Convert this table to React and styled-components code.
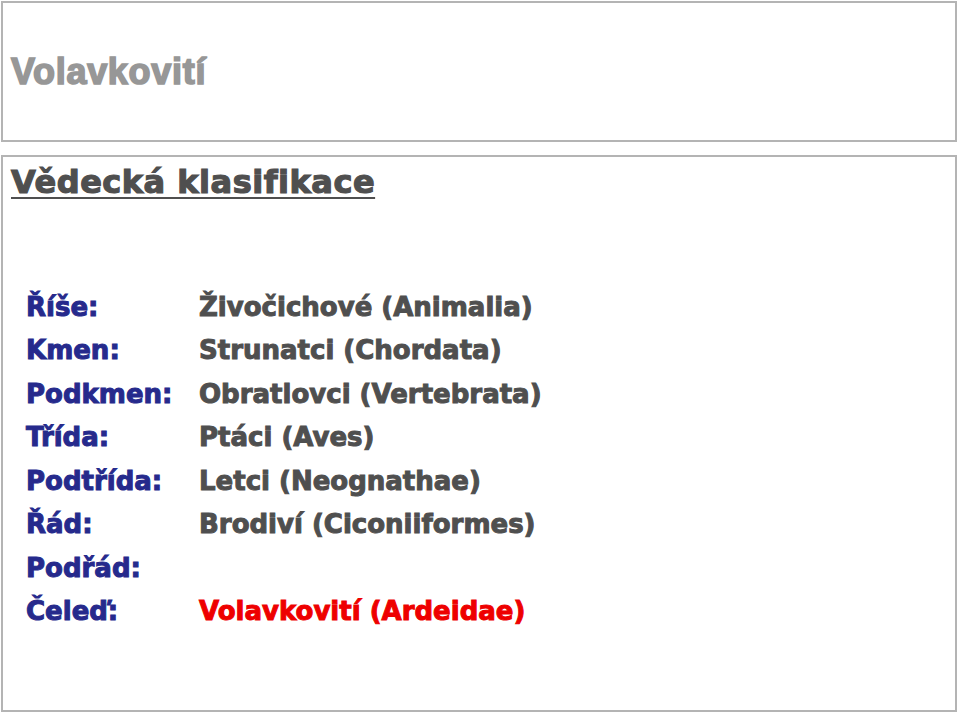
import styled, { createGlobalStyle } from 'styled-components'

const GlobalStyle = createGlobalStyle`
    html, body {
        margin: 0;
        padding: 0;
        background: #fff;
    }
    body {
        font-family: "DejaVu Sans", "Liberation Sans", Arial, sans-serif;
    }
`

const rows = [
    { rank: 'Říše:', name: 'Živočichové (Animalia)' },
    { rank: 'Kmen:', name: 'Strunatci (Chordata)' },
    { rank: 'Podkmen:', name: 'Obratlovci (Vertebrata)' },
    { rank: 'Třída:', name: 'Ptáci (Aves)' },
    { rank: 'Podtřída:', name: 'Letci (Neognathae)' },
    { rank: 'Řád:', name: 'Brodiví (Ciconiiformes)' },
    { rank: 'Podřád:', name: '' },
    { rank: 'Čeleď:', name: 'Volavkovití (Ardeidae)', current: true },
]

function App() {
    return (
        <Page>
            <GlobalStyle />
            <TitleBox>
                <Title>Volavkovití</Title>
            </TitleBox>
            <ContentBox>
                <Heading>Vědecká klasifikace</Heading>
                <Table>
                    {rows.map((row, i) => (
                        <Row key={i}>
                            <Rank>{row.rank}</Rank>
                            <Name current={row.current}>{row.name}</Name>
                        </Row>
                    ))}
                </Table>
            </ContentBox>
        </Page>
    )
}

const Page = styled.div`
    width: 960px;
    height: 715px;
    padding: 1px 3px 3px 1px;
    box-sizing: border-box;
    display: flex;
    flex-direction: column;
    gap: 13px;
`

const TitleBox = styled.div`
    height: 141px;
    box-sizing: border-box;
    border: 2px solid #b4b4b4;
    padding: 0 0 0 8px;
    display: flex;
    align-items: center;
`

const Title = styled.h1`
    margin: 0;
    font-family: "Liberation Sans", Arial, sans-serif;
    font-size: 36px;
    font-weight: 700;
    color: #979797;
    -webkit-text-stroke: 1.6px #979797;
    letter-spacing: 0.7px;
`

const ContentBox = styled.div`
    flex: 1;
    box-sizing: border-box;
    border: 2px solid #b4b4b4;
    padding: 6px 0 0 8px;
`

const Heading = styled.h2`
    margin: 0;
    display: inline-block;
    font-size: 32px;
    font-weight: 700;
    color: #4f4f4f;
    -webkit-text-stroke: 1.2px #4f4f4f;
    letter-spacing: 0.5px;
    text-decoration: underline;
    text-decoration-thickness: 2px;
    text-underline-offset: 4px;
`

const Table = styled.div`
    margin: 84px 0 0 15px;
    display: flex;
    flex-direction: column;
`

const Row = styled.div`
    display: grid;
    grid-template-columns: 173px 1fr;
    height: 43.5px;
    align-items: center;
    font-size: 26px;
    font-weight: 700;
`

const Rank = styled.span`
    color: #262a8c;
    -webkit-text-stroke: 1px #262a8c;
`

const Name = styled.span`
    color: ${(p) => (p.current ? '#ee0000' : '#4f4f4f')};
    -webkit-text-stroke: 1px ${(p) => (p.current ? '#ee0000' : '#4f4f4f')};
`

export default App
